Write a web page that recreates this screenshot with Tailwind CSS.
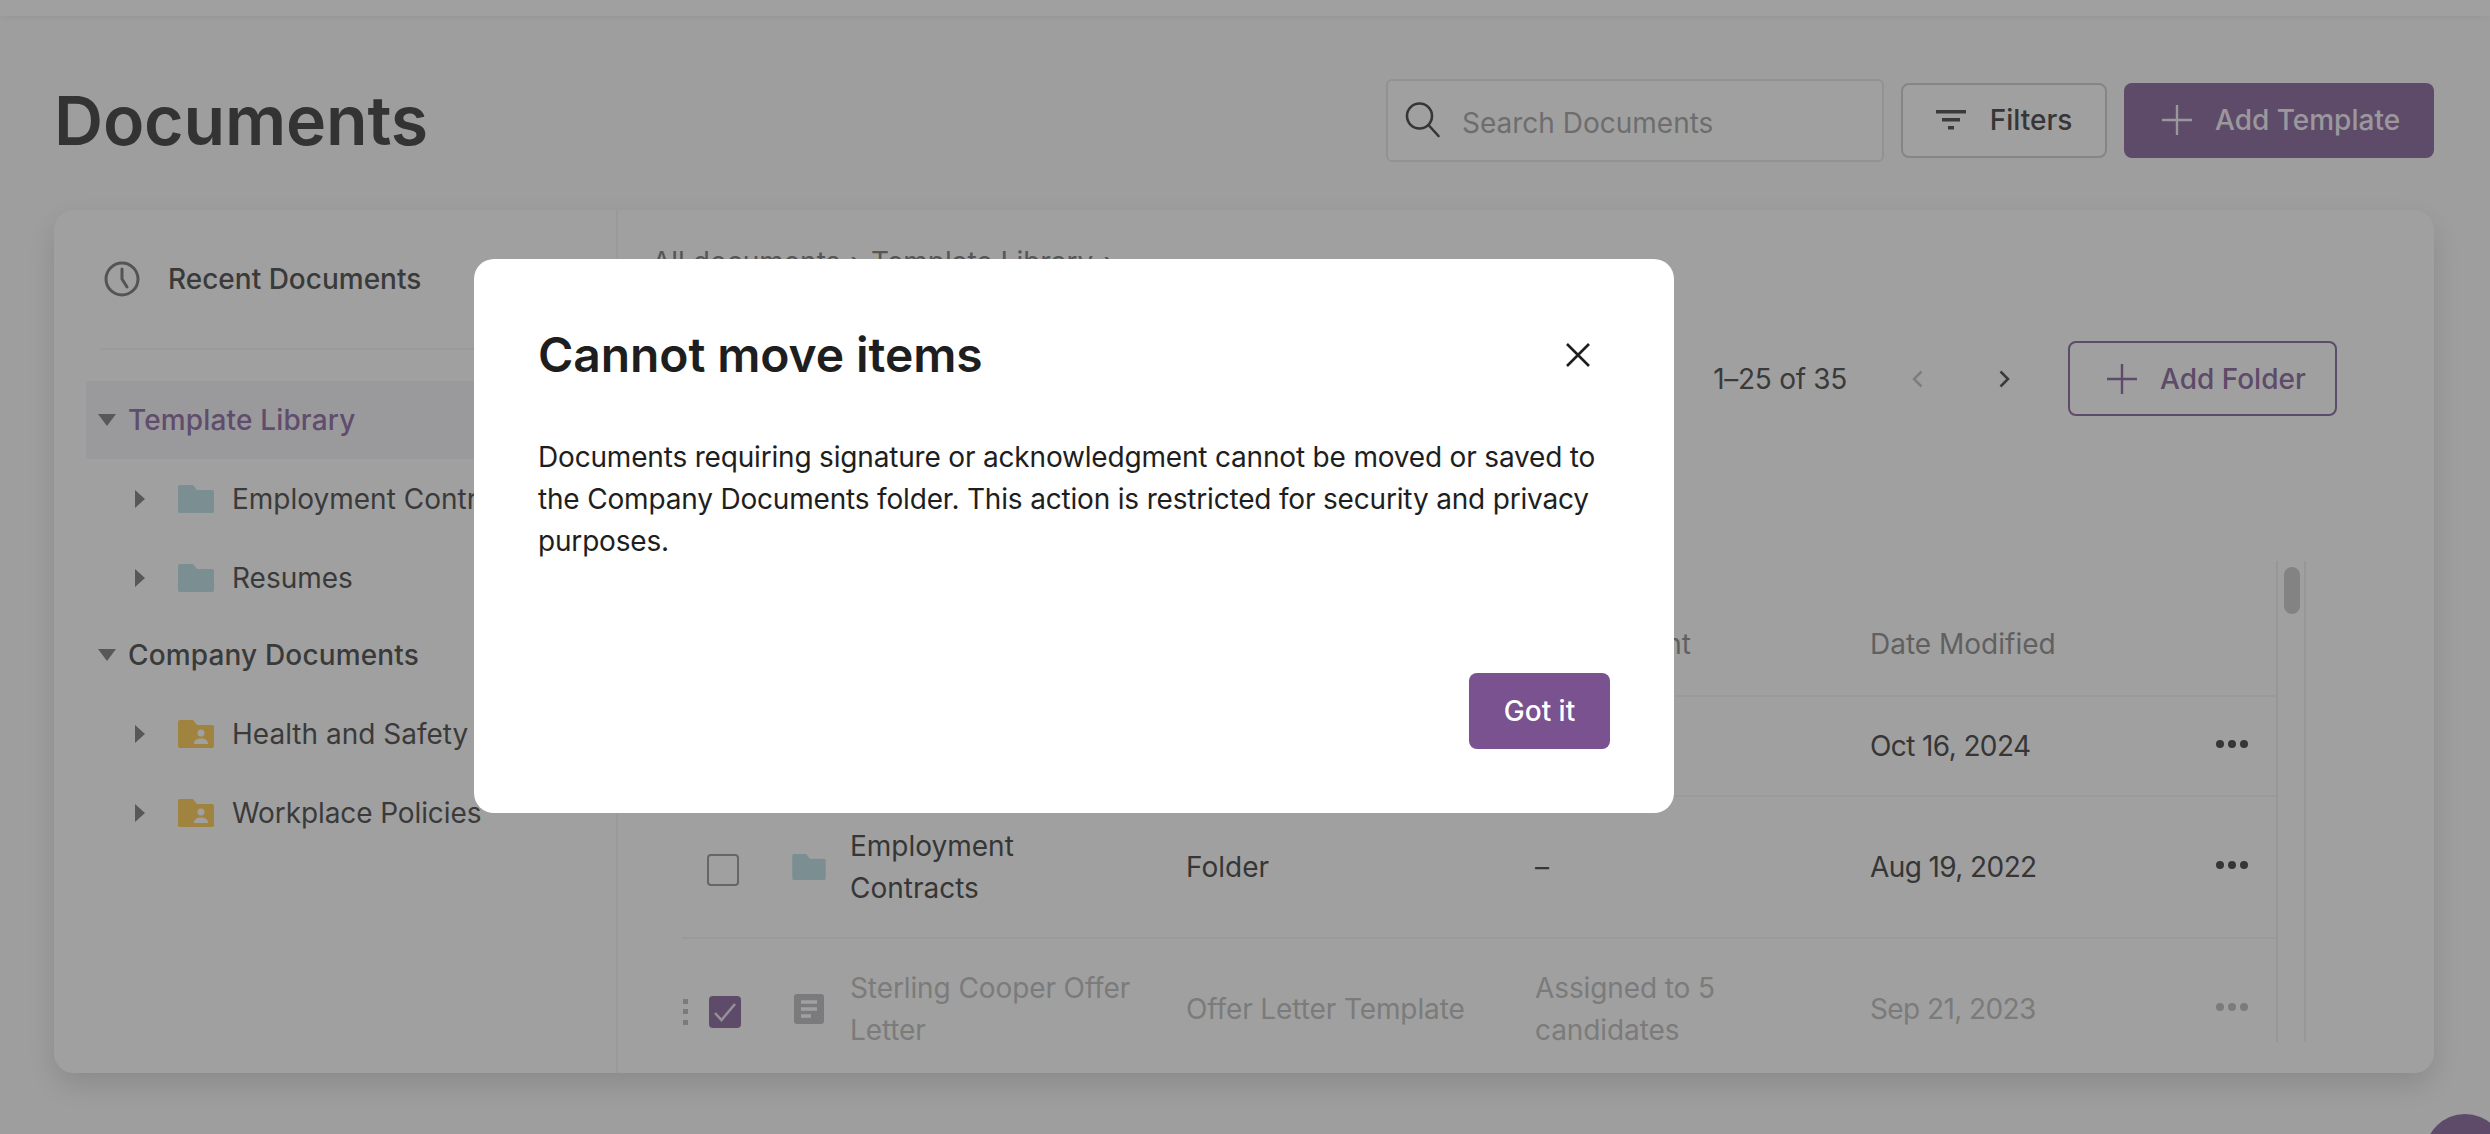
<!DOCTYPE html>
<html lang="en">
<head>
    <meta charset="UTF-8">
    <title>Documents</title>
    <script src="https://cdn.jsdelivr.net/npm/@tailwindcss/browser@4"></script>
</head>
<body class="relative w-[2490px] h-[1134px] overflow-hidden bg-[#fbfbfb] font-['Inter',sans-serif] text-[28px] leading-[42px] text-[#2a2a2a]">
    <!-- Top bar -->
    <div class="h-4 bg-white shadow-[0_2px_6px_rgba(0,0,0,0.06)]"></div>

    <!-- Page header -->
    <header class="h-[194px] pt-[14px] pl-[54px] pr-[56px] flex items-center justify-between">
        <h1 class="text-[68px] leading-[72px] font-semibold tracking-[-0.2px] text-[#252525]">Documents</h1>
        <div class="flex items-center">
            <div class="w-[498px] h-[83px] border-2 border-[#e2e2e2] rounded-[6px] bg-white flex items-center pl-[16px] mr-[17px]">
                <svg class="w-[38px] h-[36px] mr-[20px]" viewBox="0 0 38 36" fill="none" stroke="#2a2a2a" stroke-width="2.6"><circle cx="15.5" cy="14" r="12.5"/><path d="M24.5 23l10 11" stroke-linecap="round"/></svg>
                <span class="text-[#999999] pt-[6px]">Search Documents</span>
            </div>
            <button class="w-[206px] h-[75px] border-2 border-[#c9c9c9] rounded-[8px] bg-white flex items-center justify-center gap-[24px] mr-[17px] font-medium">
                <svg class="w-[30px] h-[20px]" viewBox="0 0 30 20" fill="#333333"><rect width="30" height="3.500"/><rect x="6" y="8" width="18" height="3.500"/><rect x="12" y="16" width="6" height="3.500"/></svg>
                Filters
            </button>
            <button class="w-[310px] h-[75px] rounded-[8px] bg-[#7a5290] flex items-center pl-[38px] gap-[23px] text-[#f3eef6] font-medium">
                <svg class="w-[30px] h-[30px]" viewBox="0 0 30 30" stroke="#f3eef6" stroke-width="2.4"><path d="M15 0v30M0 15h30"/></svg>
                Add Template
            </button>
        </div>
    </header>

    <!-- Card -->
    <section class="ml-[54px] w-[2380px] h-[863px] bg-white rounded-[20px] shadow-[0_12px_30px_rgba(0,0,0,0.16)] flex overflow-hidden">
        <!-- Tree sidebar -->
        <aside class="w-[564px] shrink-0 border-r-2 border-[#f3f3f3] pt-[48px] pl-[32px] font-medium">
            <div class="flex items-center h-[42px] pl-[18px] gap-[28px] text-[#333333]">
                <svg class="w-[36px] h-[36px]" viewBox="0 0 36 36" fill="none" stroke="#666666" stroke-width="3"><circle cx="18" cy="18" r="16"/><path d="M18 8v10l5 8" stroke-linecap="round" stroke-linejoin="round"/></svg>
                Recent Documents
            </div>
            <div class="h-[2px] bg-[#f3f3f3] ml-[14px] mt-[48px] mb-[31px]"></div>
            <div class="h-[78px] bg-[#f2f1f6] flex items-center pl-[12px] gap-[12px] text-[#7f5796] rounded-[4px] tracking-[0.15px]">
                <svg class="w-[18px] h-[12px]" viewBox="0 0 18 12" fill="#6e6e6e"><path d="M0 0h18l-9 12z"/></svg>
                Template Library
            </div>
            <div class="font-normal text-[#333333]">
                <div class="h-[80px] flex items-center pl-[49px] whitespace-nowrap">
                    <svg class="w-[10px] h-[18px] mr-[33px]" viewBox="0 0 10 18" fill="#6e6e6e"><path d="M0 0l10 9-10 9z"/></svg>
                    <svg class="w-[36px] h-[28px] mr-[18px]" viewBox="0 0 36 28" fill="#b4dae1"><path d="M2 0h13l4 5h15a2 2 0 0 1 2 2v19a2 2 0 0 1-2 2H2a2 2 0 0 1-2-2V2a2 2 0 0 1 2-2z"/></svg>
                    Employment Contracts
                </div>
                <div class="h-[78px] flex items-center pl-[49px]">
                    <svg class="w-[10px] h-[18px] mr-[33px]" viewBox="0 0 10 18" fill="#6e6e6e"><path d="M0 0l10 9-10 9z"/></svg>
                    <svg class="w-[36px] h-[28px] mr-[18px]" viewBox="0 0 36 28" fill="#b4dae1"><path d="M2 0h13l4 5h15a2 2 0 0 1 2 2v19a2 2 0 0 1-2 2H2a2 2 0 0 1-2-2V2a2 2 0 0 1 2-2z"/></svg>
                    Resumes
                </div>
            </div>
            <div class="h-[75px] flex items-center pl-[12px] gap-[12px] text-[#333333] tracking-[0.15px]">
                <svg class="w-[18px] h-[12px]" viewBox="0 0 18 12" fill="#6e6e6e"><path d="M0 0h18l-9 12z"/></svg>
                Company Documents
            </div>
            <div class="font-normal text-[#333333]">
                <div class="h-[82px] pt-[2px] flex items-center pl-[49px] whitespace-nowrap">
                    <svg class="w-[10px] h-[18px] mr-[33px]" viewBox="0 0 10 18" fill="#6e6e6e"><path d="M0 0l10 9-10 9z"/></svg>
                    <svg class="w-[36px] h-[28px] mr-[18px]" viewBox="0 0 36 28"><path fill="#ffc43c" d="M2 0h13l4 5h15a2 2 0 0 1 2 2v19a2 2 0 0 1-2 2H2a2 2 0 0 1-2-2V2a2 2 0 0 1 2-2z"/><circle cx="23" cy="13" r="3.5" fill="#fff"/><path fill="#fff" d="M16 24c0-4 3-5.500 7-5.500s7 1.500 7 5.500z"/></svg>
                    Health and Safety
                </div>
                <div class="h-[78px] flex items-center pl-[49px] whitespace-nowrap tracking-[-0.1px]">
                    <svg class="w-[10px] h-[18px] mr-[33px]" viewBox="0 0 10 18" fill="#6e6e6e"><path d="M0 0l10 9-10 9z"/></svg>
                    <svg class="w-[36px] h-[28px] mr-[18px]" viewBox="0 0 36 28"><path fill="#ffc43c" d="M2 0h13l4 5h15a2 2 0 0 1 2 2v19a2 2 0 0 1-2 2H2a2 2 0 0 1-2-2V2a2 2 0 0 1 2-2z"/><circle cx="23" cy="13" r="3.500" fill="#fff"/><path fill="#fff" d="M16 24c0-4 3-5.500 7-5.500s7 1.500 7 5.500z"/></svg>
                    Workplace Policies
                </div>
            </div>
        </aside>

        <!-- Main content -->
        <main class="flex-1 pt-[31px]">
            <div class="pl-[34px] flex gap-[10px] text-[#6a6a6a] h-[42px] items-center">
                <span>All documents</span><span>›</span><span>Template Library</span><span>›</span>
            </div>
            <div class="flex justify-end items-center pr-[97px] mt-[58px] h-[75px]">
                <span class="mr-[65px] text-[#333333] tracking-[-0.3px]">1–25 of 35</span>
                <svg class="w-[11px] h-[18px] mr-[76px]" viewBox="0 0 11 18" fill="none" stroke="#b9b9b9" stroke-width="2.500"><path d="M9.500 1.500L2 9l7.500 7.500"/></svg>
                <svg class="w-[11px] h-[18px] mr-[58px]" viewBox="0 0 11 18" fill="none" stroke="#333333" stroke-width="2.500"><path d="M1.500 1.500L9 9l-7.500 7.500"/></svg>
                <button class="w-[269px] h-[75px] border-2 border-[#7a5290] rounded-[8px] flex items-center pl-[37px] gap-[23px] text-[#7a5290] font-medium">
                    <svg class="w-[30px] h-[30px]" viewBox="0 0 30 30" stroke="#7a5290" stroke-width="2.400"><path d="M15 0v30M0 15h30"/></svg>
                    Add Folder
                </button>
            </div>

            <!-- Table with its own scroll bar -->
            <div class="ml-[64px] mt-[145px] w-[1624px] h-[481px] flex overflow-hidden">
                <div class="w-[1594px] shrink-0">
                    <div class="h-[136px] pb-[30px] grid grid-cols-[110px_58px_336px_349px_335px_346px_60px] items-end border-b-2 border-[#f3f3f3] text-[#7f7f7f]">
                        <span></span><span></span><span>Name</span><span>Type</span><span>Assignment</span><span>Date Modified</span><span></span>
                    </div>
                    <div class="h-[100px] grid grid-cols-[110px_58px_336px_349px_335px_346px_60px] items-center border-b-2 border-[#f3f3f3]">
                        <span class="pl-[25px]"><span class="block w-[32px] h-[32px] border-2 border-[#8a8a8a] rounded-[4px] bg-white"></span></span>
                        <svg class="w-[34px] h-[26px]" viewBox="0 0 36 28" fill="#b4dae1"><path d="M2 0h13l4 5h15a2 2 0 0 1 2 2v19a2 2 0 0 1-2 2H2a2 2 0 0 1-2-2V2a2 2 0 0 1 2-2z"/></svg>
                        <span>Resumes</span><span>Folder</span><span>–</span><span class="tracking-[-0.6px]">Oct 16, 2024</span>
                        <svg class="w-[32px] h-[8px] -mt-[4px]" viewBox="0 0 32 8" fill="#2a2a2a"><circle cx="4" cy="4" r="4"/><circle cx="16" cy="4" r="4"/><circle cx="28" cy="4" r="4"/></svg>
                    </div>
                    <div class="h-[142px] grid grid-cols-[110px_58px_336px_349px_335px_346px_60px] items-center border-b-2 border-[#f3f3f3]">
                        <span class="pl-[25px] pt-[6px]"><span class="block w-[32px] h-[32px] border-2 border-[#8a8a8a] rounded-[4px] bg-white"></span></span>
                        <svg class="w-[34px] h-[26px]" viewBox="0 0 36 28" fill="#b4dae1"><path d="M2 0h13l4 5h15a2 2 0 0 1 2 2v19a2 2 0 0 1-2 2H2a2 2 0 0 1-2-2V2a2 2 0 0 1 2-2z"/></svg>
                        <span>Employment<br>Contracts</span><span>Folder</span><span>–</span><span class="tracking-[-0.6px]">Aug 19, 2022</span>
                        <svg class="w-[32px] h-[8px] -mt-[4px]" viewBox="0 0 32 8" fill="#2a2a2a"><circle cx="4" cy="4" r="4"/><circle cx="16" cy="4" r="4"/><circle cx="28" cy="4" r="4"/></svg>
                    </div>
                    <div class="h-[142px] pb-[3px] grid grid-cols-[110px_58px_336px_349px_335px_346px_60px] items-center text-[#b4b4b4]">
                        <span class="pl-[1px] pt-[6px] flex items-center gap-[21px]">
                            <svg class="w-[5px] h-[26px]" viewBox="0 0 5 26" fill="#b4b4b4"><rect width="5" height="5"/><rect y="10" width="5" height="5"/><rect y="21" width="5" height="5"/></svg>
                            <span class="w-[32px] h-[32px] rounded-[4px] bg-[#7a5290] flex items-center justify-center">
                                <svg class="w-[24px] h-[20px]" viewBox="0 0 24 20" fill="none" stroke="#e8e0ee" stroke-width="2.500"><path d="M2 11l6.500 7L22 2"/></svg>
                            </span>
                        </span>
                        <svg class="ml-[2px] w-[30px] h-[30px]" viewBox="0 0 30 30"><rect width="30" height="30" rx="3" fill="#b4b4b8"/><path d="M7 8h16M7 15h16M7 22h10" stroke="#fff" stroke-width="3.500"/></svg>
                        <span class="tracking-[-0.1px]">Sterling Cooper Offer<br>Letter</span><span class="tracking-[-0.1px]">Offer Letter Template</span><span class="tracking-[-0.1px]">Assigned to 5<br>candidates</span><span class="tracking-[-0.6px]">Sep 21, 2023</span>
                        <svg class="w-[32px] h-[8px] -mt-[4px]" viewBox="0 0 32 8" fill="#b4b4b4"><circle cx="4" cy="4" r="4"/><circle cx="16" cy="4" r="4"/><circle cx="28" cy="4" r="4"/></svg>
                    </div>
                </div>
                <div class="w-[30px] shrink-0 border-x-2 border-[#ececec] pt-[6px] pl-[6px]">
                    <div class="w-[16px] h-[47px] rounded-full bg-[#c4c4c4]"></div>
                </div>
            </div>
        </main>
    </section>

    <!-- Floating help button, mostly off screen -->
    <div class="absolute left-[2425px] top-[1114px] w-[80px] h-[80px] rounded-full bg-[#7a5290]"></div>

    <!-- Overlay -->
    <div class="absolute inset-0 bg-[#414141]/50"></div>

    <!-- Modal -->
    <div class="absolute left-[474px] top-[259px] w-[1200px] h-[554px] bg-white rounded-[20px] pl-[64px] pr-[64px] pt-[64px] flex flex-col">
        <div class="flex items-center justify-between h-[64px]">
            <h2 class="text-[48px] leading-[64px] font-semibold tracking-[-0.1px] text-[#1e1e1e]">Cannot move items</h2>
            <svg class="w-[24px] h-[24px] mr-[20px]" viewBox="0 0 24 24" stroke="#1e1e1e" stroke-width="2.600"><path d="M1 1l22 22M23 1L1 23"/></svg>
        </div>
        <p class="mt-[49px] text-[#1e1e1e] whitespace-nowrap tracking-[-0.18px]">Documents requiring signature or acknowledgment cannot be moved or saved to<br>the Company Documents folder. This action is restricted for security and privacy<br>purposes.</p>
        <div class="mt-auto mb-[63px] flex justify-end">
            <button class="w-[141px] h-[76px] rounded-[8px] bg-[#7a5290] text-white font-medium -translate-y-[1px]">Got it</button>
        </div>
    </div>
</body>
</html>
